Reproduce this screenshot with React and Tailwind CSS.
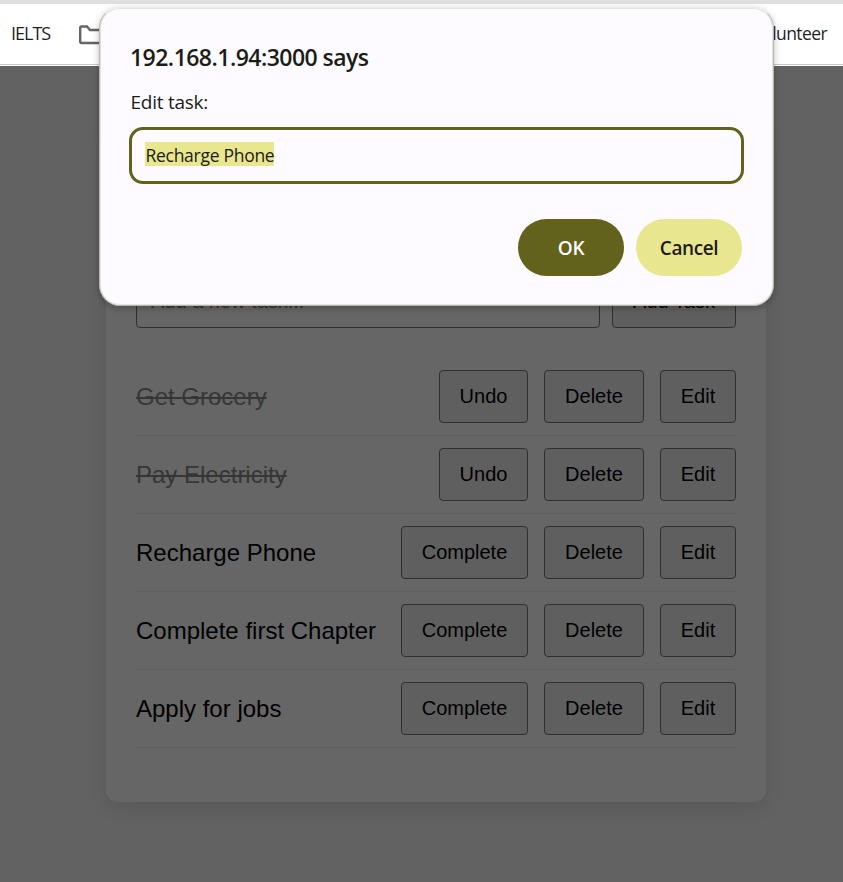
const tasks = [
  { name: "Get Grocery", done: true },
  { name: "Pay Electricity", done: true },
  { name: "Recharge Phone", done: false },
  { name: "Complete first Chapter", done: false },
  { name: "Apply for jobs", done: false },
];

const actionClass =
  "h-[53px] shrink-0 rounded-[4px] border border-[#2f2f2f] bg-[#5f5f5f] text-center text-[20px] leading-[51px] text-black";

function Task({ name, done }) {
  return (
    <li className="flex h-[78px] items-center justify-between border-b border-[#5f5f5f]">
      <span
        className={
          done
            ? "text-[24px] leading-[28px] whitespace-nowrap text-[#363636] line-through decoration-2"
            : "text-[24px] leading-[28px] whitespace-nowrap text-black"
        }
      >
        {name}
      </span>
      <div className="flex gap-4">
        <button className={`${actionClass} ${done ? "w-[89px]" : "w-[127px]"}`}>
          {done ? "Undo" : "Complete"}
        </button>
        <button className={`${actionClass} w-[100px]`}>Delete</button>
        <button className={`${actionClass} w-[76px]`}>Edit</button>
      </div>
    </li>
  );
}

function BookmarksBar() {
  return (
    <header className="flex h-[66px] items-center justify-between border-t-4 border-[#dfdfdf] bg-white pr-[16px] pl-[11px] font-['Open_Sans',sans-serif] text-[18px] text-[#1f1f1f] shadow-[inset_0_-1px_0_#fff,inset_0_-2px_0_#c8c8c8]">
      <div className="flex items-center gap-[27px]">
        <span className="w-[41px] pb-[3px] tracking-[-1px]">IELTS</span>
        <svg className="mb-px" width="28" height="20" viewBox="0 0 28 20" fill="none" stroke="#656565" strokeWidth="2.4">
          <path d="M2.500 1.500H8l3 3.500h15v13H2.500Q1.200 18 1.200 16.500V3Q1.200 1.500 2.500 1.500Z" />
        </svg>
      </div>
      <span className="pb-[3px] text-[17.5px] tracking-[-0.6px]">Volunteer</span>
    </header>
  );
}

function PromptDialog() {
  return (
    <section className="absolute top-[7px] left-[99px] flex h-[299px] w-[675px] flex-col rounded-[21px] border border-[#b9b7ae] border-t-[#efede5] bg-[#fdfbff] px-[29px] font-['Open_Sans',sans-serif] text-[#1c1c17] shadow-[inset_0_0_0_1px_#e6e4da,0_2px_7px_rgba(0,0,0,0.25)]">
      <h1 className="mt-[33px] pl-px text-[23px] leading-[32px] font-semibold tracking-[-0.53px] whitespace-nowrap">
        192.168.1.94:3000 says
      </h1>
      <p className="mt-[17px] pl-[1.5px] text-[19px] leading-[24px] tracking-[-0.25px]">Edit task:</p>
      <div className="mt-[13px] flex h-[57px] w-[615px] shrink-0 items-center rounded-[14px] border-3 border-[#63621d] pl-[13px]">
        <span className="mb-[3px] h-[24px] w-[129px] bg-[#e8e68f] pl-[0.5px] text-[17.5px] leading-[27px] tracking-[-0.28px] whitespace-nowrap">
          Recharge Phone
        </span>
      </div>
      <div className="mt-[35px] flex justify-end gap-3 pr-[2px]">
        <button className="h-[57px] w-[106px] rounded-full bg-[#63621d] pt-[2px] text-[19px] font-semibold tracking-[-0.2px] text-white">OK</button>
        <button className="h-[57px] w-[106px] rounded-full bg-[#e8e68f] pt-[2px] text-[19px] font-semibold tracking-[-0.4px]">Cancel</button>
      </div>
    </section>
  );
}

export default function App() {
  return (
    <div className="relative h-[882px] w-[843px] overflow-hidden bg-[#626262] font-['Liberation_Sans',Arial,sans-serif]">
      <BookmarksBar />
      <main className="mt-[60px] ml-[106px] h-[676px] w-[660px] rounded-[12px] bg-[#666666] px-[30px] pt-[149px] shadow-[0_6px_18px_rgba(0,0,0,0.1)]">
        <div className="flex gap-3">
          <input
            className="h-[53px] w-[464px] rounded-[4px] border border-[#2f2f2f] px-[14px] text-[20px] placeholder:text-[#303030]"
            placeholder="Add a new task..."
          />
          <button className={`${actionClass} w-[124px]`}>Add Task</button>
        </div>
        <ul className="mt-[30px]">
          {tasks.map((task) => (
            <Task key={task.name} {...task} />
          ))}
        </ul>
      </main>
      <PromptDialog />
    </div>
  );
}
